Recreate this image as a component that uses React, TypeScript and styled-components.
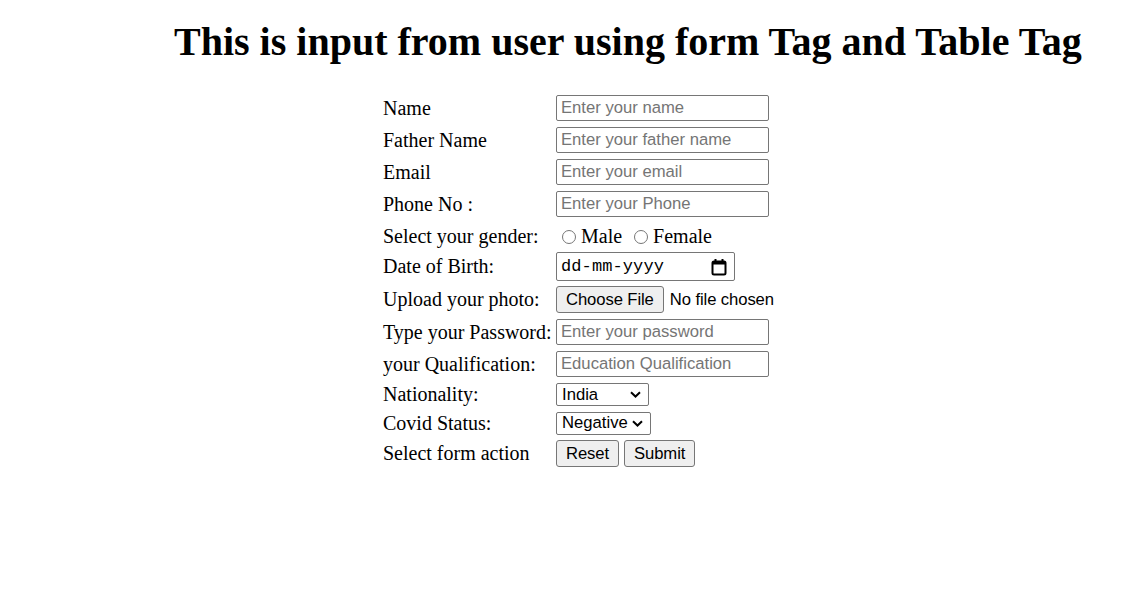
import { FC } from 'react'
import styled, { createGlobalStyle } from 'styled-components'

const GlobalLayout = createGlobalStyle`
  body {
    margin: 0;
    background-color: #ffffff;
    color: #000000;
    font-family: "Liberation Serif", "Times New Roman", serif;
  }
`

const CalendarIcon: FC = () => (
  <svg width="16" height="18" viewBox="0 0 16 18" fill="none">
    <rect x="1.5" y="3.5" width="13" height="13" rx="1.5" stroke="#000" strokeWidth="2" />
    <rect x="1.5" y="3.5" width="13" height="3" fill="#000" />
    <line x1="4.5" y1="1" x2="4.5" y2="4" stroke="#000" strokeWidth="2" />
    <line x1="11.5" y1="1" x2="11.5" y2="4" stroke="#000" strokeWidth="2" />
  </svg>
)

const Chevron: FC = () => (
  <svg width="11" height="7" viewBox="0 0 11 7" fill="none">
    <path d="M1 1.2 L5.5 5.5 L10 1.2" stroke="#000" strokeWidth="2" />
  </svg>
)

const App: FC = () => (
  <Page>
    <GlobalLayout />
    <Heading>This is input from user using form Tag and Table Tag</Heading>
    <FormTable onSubmit={(e) => e.preventDefault()}>
      <Label>Name</Label>
      <Cell><TextInput type="text" placeholder="Enter your name" /></Cell>

      <Label>Father Name</Label>
      <Cell><TextInput type="text" placeholder="Enter your father name" /></Cell>

      <Label>Email</Label>
      <Cell><TextInput type="email" placeholder="Enter your email" /></Cell>

      <Label>Phone No :</Label>
      <Cell><TextInput type="tel" placeholder="Enter your Phone" /></Cell>

      <Label $lower>Select your gender:</Label>
      <Cell $lower>
        <Radio type="radio" name="gender" id="male" />
        <RadioText htmlFor="male">Male</RadioText>
        <Radio type="radio" name="gender" id="female" $spaced />
        <RadioText htmlFor="female">Female</RadioText>
      </Cell>

      <Label>Date of Birth:</Label>
      <Cell>
        <DateBox>
          <span>dd-mm-yyyy</span>
          <CalendarIcon />
        </DateBox>
      </Cell>

      <Label>Upload your photo:</Label>
      <Cell>
        <Button type="button">Choose File</Button>
        <FileName>No file chosen</FileName>
      </Cell>

      <Label>Type your Password:</Label>
      <Cell><TextInput type="password" placeholder="Enter your password" /></Cell>

      <Label>your Qualification:</Label>
      <Cell><TextInput type="text" placeholder="Education Qualification" /></Cell>

      <Label>Nationality:</Label>
      <Cell>
        <SelectBox $width={93}>
          <span>India</span>
          <Chevron />
        </SelectBox>
      </Cell>

      <Label>Covid Status:</Label>
      <Cell>
        <SelectBox $width={95}>
          <span>Negative</span>
          <Chevron />
        </SelectBox>
      </Cell>

      <Label>Select form action</Label>
      <Cell>
        <Button type="reset">Reset</Button>
        <Button type="submit">Submit</Button>
      </Cell>
    </FormTable>
  </Page>
)

const Page = styled.div`
  padding-top: 20px;
  min-height: 599px;
  box-sizing: border-box;
`

const Heading = styled.h1`
  margin: 0;
  padding-left: 174px;
  font-size: 40px;
  font-weight: 700;
  line-height: 44px;
  white-space: nowrap;
`

const FormTable = styled.form`
  display: grid;
  grid-template-columns: 173px auto;
  grid-template-rows: 32px 32px 32px 32px 29.5px 34px 32.5px 32px 32.5px 28.5px 28.5px 32.5px;
  margin: 28px 0 0 383px;
  width: max-content;
`

const Label = styled.div<{ $lower?: boolean }>`
  display: flex;
  align-items: center;
  padding-top: ${(p) => (p.$lower ? 3 : 0)}px;
  font-size: 20px;
  white-space: nowrap;
`

const Cell = styled.div<{ $lower?: boolean }>`
  display: flex;
  align-items: center;
  padding-top: ${(p) => (p.$lower ? 3 : 0)}px;
  white-space: nowrap;
`

const TextInput = styled.input`
  width: 213px;
  height: 26px;
  box-sizing: border-box;
  margin: 0;
  padding: 1px 4px;
  border: 1px solid #767676;
  border-radius: 2px;
  font-family: "Liberation Sans", Arial, sans-serif;
  font-size: 16.67px;
  color: #000;
  outline: none;

  &::placeholder {
    color: #757575;
  }
`

const Radio = styled.input<{ $spaced?: boolean }>`
  appearance: none;
  width: 14px;
  height: 14px;
  box-sizing: border-box;
  margin: 1px 5px 0 ${(p) => (p.$spaced ? 12 : 6)}px;
  border: 1px solid #767676;
  border-radius: 50%;
  background: #fff;
`

const RadioText = styled.label`
  font-size: 20px;
`

const DateBox = styled.div`
  display: flex;
  align-items: center;
  justify-content: space-between;
  width: 179px;
  height: 29px;
  box-sizing: border-box;
  padding: 0 7px 0 4px;
  border: 1px solid #767676;
  border-radius: 2px;
  font-family: "Liberation Mono", "Courier New", monospace;
  font-size: 17px;
  letter-spacing: 0.1px;
`

const Button = styled.button`
  height: 27px;
  box-sizing: border-box;
  margin: 0 5px 0 0;
  padding: 0 9px;
  border: 1px solid #767676;
  border-radius: 3px;
  background-color: #efefef;
  color: #000;
  font-family: "Liberation Sans", Arial, sans-serif;
  font-size: 16.67px;
  letter-spacing: -0.1px;
`

const FileName = styled.span`
  margin-left: 1px;
  font-family: "Liberation Sans", Arial, sans-serif;
  font-size: 16.67px;
  letter-spacing: -0.1px;
`

const SelectBox = styled.div<{ $width: number }>`
  display: flex;
  align-items: center;
  justify-content: space-between;
  width: ${(p) => p.$width}px;
  height: 23px;
  box-sizing: border-box;
  padding: 0 7px 0 5px;
  border: 1px solid #767676;
  border-radius: 2px;
  font-family: "Liberation Sans", Arial, sans-serif;
  font-size: 16.67px;
`

export default App
